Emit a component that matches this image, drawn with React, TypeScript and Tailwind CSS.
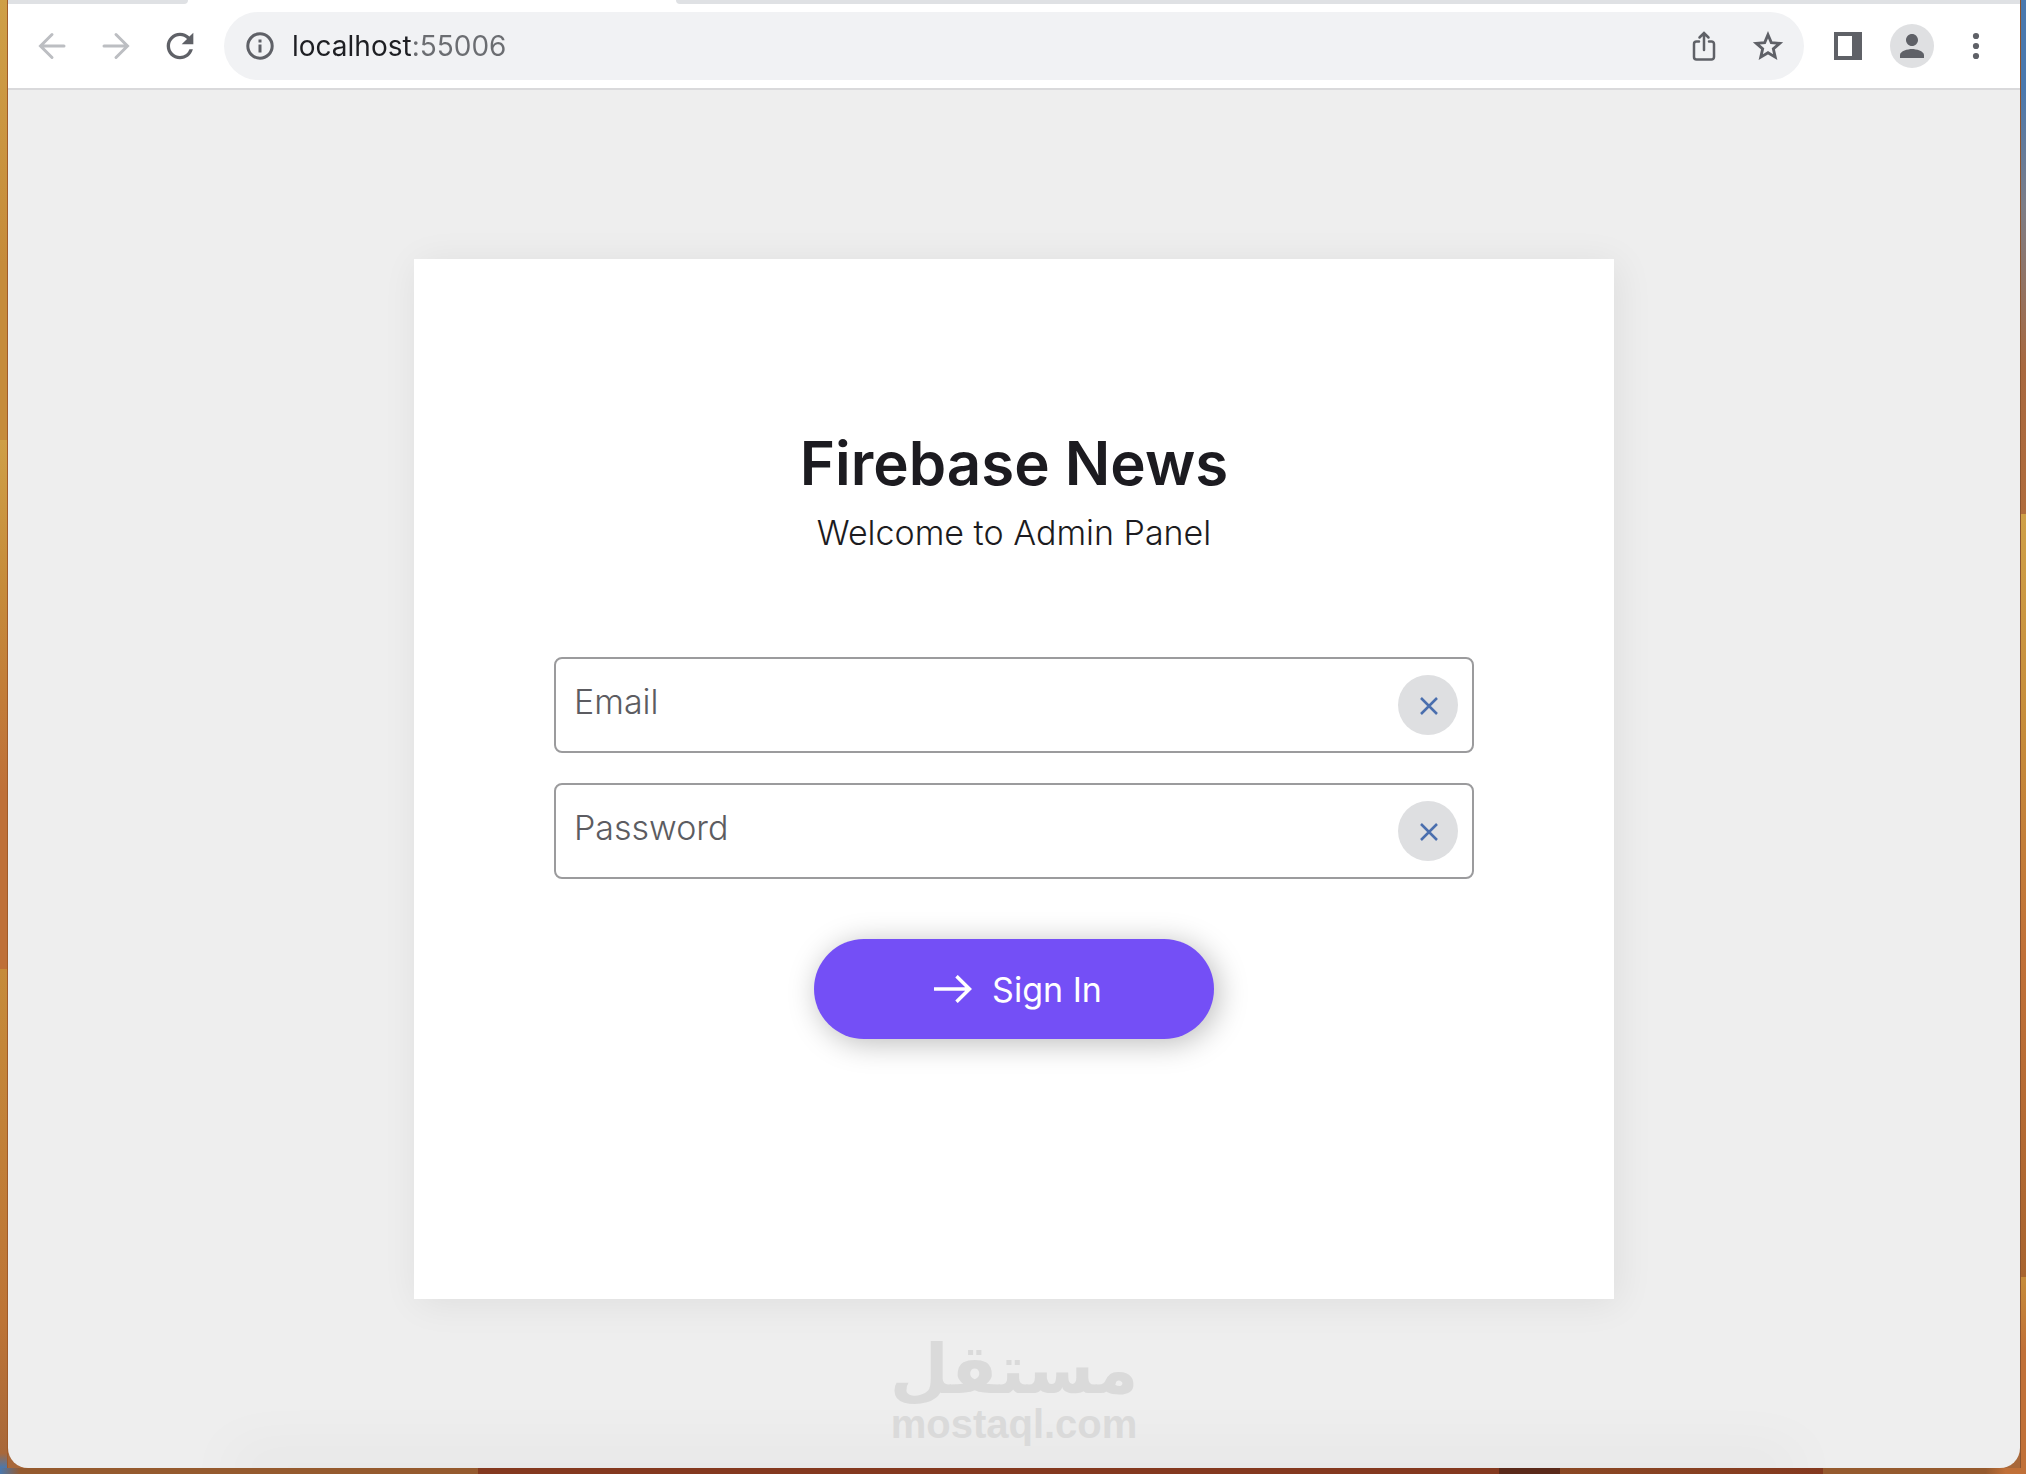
import { useState } from "react";
import type { ReactNode } from "react";
import { MdPerson, MdRefresh } from "react-icons/md";

export default function App() {
  const [email, setEmail] = useState("");
  const [password, setPassword] = useState("");

  return (
    <div className="min-h-screen flex flex-col bg-[#a8683a] font-['Inter',sans-serif]">
      <div className="flex-1 flex">
        {/* Desktop wallpaper, left edge */}
        <div className="w-2 shrink-0 border-r border-[#a05a2a] bg-[linear-gradient(to_bottom,#cf9f47_0%,#c68b3a_18%,#c68b3a_30%,#cf9f47_30%,#c68b3a_40%,#bf7038_54%,#bf7038_66%,#c68b3a_66%,#bd7436_90%,#a8683a_99%,#4a78ae_100%)]" />

        <div className="flex-1 min-w-0 flex flex-col bg-[#eeeeee] rounded-b-[20px] overflow-hidden">
          <BrowserBar />

          <main className="relative flex-1 flex items-center justify-center">
            <form
              className="w-full max-w-[1200px] bg-white px-[140px] pt-[164px] pb-[260px] flex flex-col items-center shadow-[4px_4px_36px_rgba(0,0,0,0.07)]"
              onSubmit={(e) => e.preventDefault()}
            >
              <h1 className="text-[60px] leading-[80px] font-semibold text-[#1c1b20]">Firebase News</h1>
              <p className="text-[34px] leading-[60px] font-light text-[#1c1b20]">Welcome to Admin Panel</p>

              <div className="w-full mt-[94px] flex flex-col gap-[30px]">
                <Field label="Email" type="email" value={email} onChange={setEmail} />
                <Field label="Password" type="password" value={password} onChange={setPassword} />
              </div>

              <button
                type="submit"
                className="mt-[60px] w-[400px] h-[100px] rounded-full bg-[#744ff6] text-white text-[34px] pl-2 flex items-center justify-center gap-5 shadow-[4px_4px_30px_rgba(0,0,0,0.27)]"
              >
                <svg className="w-[38px] h-7" viewBox="0 0 38 28" fill="none" stroke="currentColor" strokeWidth={3.500}>
                  <path d="M0 14h36M22.500 1.200L35.500 14L22.500 26.800" />
                </svg>
                Sign In
              </button>
            </form>

            <Watermark />
          </main>
        </div>

        {/* Desktop wallpaper, right edge */}
        <div className="w-1.5 shrink-0 border-l border-[#8a5430] bg-[linear-gradient(to_bottom,#4a78ae_0%,#4a78ae_6%,#7c7c86_14%,#a8683f_25%,#b06c3c_35%,#cf9f47_35%,#c68b3a_50%,#c07038_65%,#a8642f_87%,#c68b3a_87%,#c07038_92%,#c07038_100%)]" />
      </div>

      {/* Desktop wallpaper, bottom edge */}
      <div className="h-1.5 shrink-0 bg-[linear-gradient(to_right,#4a78ae_0%,#955a2e_1%,#955a2e_23.6%,#84391f_23.6%,#84391f_74%,#5a2a1a_74%,#5a2a1a_77%,#8a4824_77%,#84391f_90%,#955a2e_90%,#955a2e_98%,#c07038_99%)]" />
    </div>
  );
}

function BrowserBar() {
  return (
    <header className="shrink-0 bg-white border-b-2 border-[#d9d9db]">
      {/* Bottom of the tab strip */}
      <div className="h-1 flex justify-between">
        <div className="w-[180px] bg-[#dfe1e4] rounded-br" />
        <div className="w-[1344px] bg-[#dfe1e4] rounded-bl" />
      </div>

      <div className="h-[84px] px-3 flex items-center gap-3 text-[#5f6167]">
        <nav className="flex">
          <BarButton label="Back">
            <svg className="w-7 h-7 text-[#bcbec2]" viewBox="0 0 28 28" fill="none" stroke="currentColor" strokeWidth={3} strokeLinecap="round">
              <path d="M26 14H3M14 2.500L2.500 14L14 25.500" />
            </svg>
          </BarButton>
          <BarButton label="Forward">
            <svg className="w-7 h-7 text-[#bcbec2]" viewBox="0 0 28 28" fill="none" stroke="currentColor" strokeWidth={3} strokeLinecap="round">
              <path d="M2 14h23M14 2.500L25.500 14L14 25.500" />
            </svg>
          </BarButton>
          <BarButton label="Reload">
            <MdRefresh className="w-10 h-10" />
          </BarButton>
        </nav>

        <div className="flex-1 min-w-0 h-[68px] rounded-full bg-[#f1f2f4] pl-[22px] pr-1 flex items-center">
          <svg className="w-7 h-7 shrink-0" viewBox="0 0 28 28" fill="none" stroke="currentColor" strokeWidth={3}>
            <circle cx="14" cy="14" r="12.200" />
            <path d="M14 12.500v8M14 7.500v3" />
          </svg>
          {/* Host is dark and port is grey, so the text is painted by a two-stop background */}
          <input
            className="ml-[18px] flex-1 min-w-0 text-[28px] leading-9 outline-none text-transparent bg-clip-text bg-[linear-gradient(to_right,#1e1f23_120px,#6b6d71_120px)]"
            type="text"
            aria-label="Address"
            defaultValue="localhost:55006"
          />
          <BarButton label="Share">
            <svg className="w-8 h-8" viewBox="0 0 32 32" fill="none" stroke="currentColor" strokeWidth={2.500} strokeLinecap="round">
              <path d="M11 11.500H8.500a2.500 2.500 0 0 0-2.500 2.500v13a2.500 2.500 0 0 0 2.500 2.500h15a2.500 2.500 0 0 0 2.500-2.500v-13a2.500 2.500 0 0 0-2.500-2.500H21M16 20V4M11.500 7.500L16 3l4.500 4.500" />
            </svg>
          </BarButton>
          <BarButton label="Bookmark">
            <svg className="w-9 h-9" viewBox="0 0 24 24" fill="none" stroke="currentColor" strokeWidth={1.900}>
              <path d="M12 4.500l2.200 5.200 5.600.5-4.250 3.700 1.270 5.500L12 16.480 7.180 19.400l1.270-5.500L4.200 10.200l5.600-.5z" />
            </svg>
          </BarButton>
        </div>

        <div className="flex">
          <BarButton label="Side panel">
            <svg className="w-7 h-7" viewBox="0 0 28 28" fill="currentColor" fillRule="evenodd">
              <path d="M0 0h28v28H0zM4 4v20h14V4z" />
            </svg>
          </BarButton>
          <BarButton label="Profile">
            <span className="w-11 h-11 rounded-full bg-[#dfe0e2] flex items-center justify-center">
              <MdPerson className="w-9 h-9" />
            </span>
          </BarButton>
          <BarButton label="Menu">
            <svg className="w-7 h-7" viewBox="0 0 28 28" fill="currentColor">
              <circle cx="14" cy="4" r="3.100" />
              <circle cx="14" cy="14" r="3.100" />
              <circle cx="14" cy="24" r="3.100" />
            </svg>
          </BarButton>
        </div>
      </div>
    </header>
  );
}

function BarButton({ label, children }: { label: string; children: ReactNode }) {
  return (
    <button type="button" aria-label={label} className="w-16 h-16 shrink-0 flex items-center justify-center">
      {children}
    </button>
  );
}

interface FieldProps {
  label: string;
  type: string;
  value: string;
  onChange: (value: string) => void;
}

function Field({ label, type, value, onChange }: FieldProps) {
  return (
    <div className="h-24 border-2 border-[#9b9b9d] rounded-lg pr-3.5 flex items-center">
      <input
        className="flex-1 min-w-0 h-full pl-[18px] pb-2 text-[34px] font-light text-[#1c1b20] placeholder:text-[#5c5c61] outline-none"
        type={type}
        aria-label={label}
        placeholder={label}
        value={value}
        onChange={(e) => onChange(e.target.value)}
      />
      <button
        type="button"
        aria-label={`Clear ${label}`}
        onClick={() => onChange("")}
        className="w-[60px] h-[60px] shrink-0 rounded-full bg-[#dedfe1] text-[#4a6fae] flex items-center justify-center"
      >
        <svg className="w-5 h-5" viewBox="0 0 20 20" fill="none" stroke="currentColor" strokeWidth={2.500}>
          <path d="M3 3l16 16M19 3L3 19" />
        </svg>
      </button>
    </div>
  );
}

function Watermark() {
  return (
    <>
      <div className="absolute bottom-0 inset-x-[240px] h-0 shadow-[0_0_60px_20px_rgba(0,0,0,0.04)]" />
      <div className="absolute bottom-5 inset-x-0 flex flex-col items-center text-[#dadada] font-bold pointer-events-none">
        <span lang="ar" dir="rtl" className="text-[68px] leading-[60px] font-['DejaVu_Sans',sans-serif]">
          مستقل
        </span>
        <span className="text-[40px] leading-[48px] font-['Liberation_Sans',sans-serif]">mostaql.com</span>
      </div>
    </>
  );
}
